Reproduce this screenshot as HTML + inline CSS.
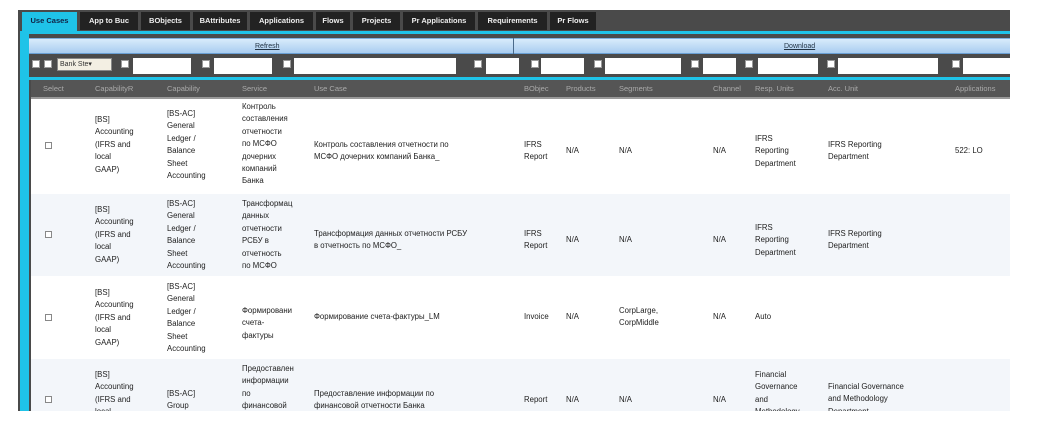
<!DOCTYPE html>
<html><head><style>
*{margin:0;padding:0;box-sizing:border-box}
body{width:1040px;height:437px;background:#fff;position:relative;overflow:hidden;font-family:"Liberation Sans","Noto Sans CJK SC",sans-serif;font-size:8px;color:#333}
.a{position:absolute}
.tab{position:absolute;top:12px;height:18px;background:#222;color:#eee;font-size:7.5px;font-weight:bold;line-height:18px;text-align:center}
.cb{position:absolute;width:8px;height:8px;background:#fff;border:1px solid #999}
.in{position:absolute;height:16px;background:#fff;top:58px}
.h{position:absolute;top:84px;color:#aaa;font-size:7.5px}
.t{position:absolute;line-height:12.4px;font-size:7.8px;color:#222}
.ck{position:absolute;width:7px;height:7px;border:1px solid #888;background:#fff;left:45px}
</style></head><body>
<div class="a" style="left:18px;top:10px;width:992px;height:88px;background:#4a4a4a"></div>
<div class="tab" style="left:22px;width:55px;background:#1fc3e8;color:#124;top:12px;height:20px">Use Cases</div>
<div class="tab" style="left:80px;width:58px">App to Buc</div>
<div class="tab" style="left:141px;width:49px">BObjects</div>
<div class="tab" style="left:193px;width:54px">BAttributes</div>
<div class="tab" style="left:250px;width:63px">Applications</div>
<div class="tab" style="left:316px;width:34px">Flows</div>
<div class="tab" style="left:353px;width:47px">Projects</div>
<div class="tab" style="left:403px;width:72px">Pr Applications</div>
<div class="tab" style="left:478px;width:69px">Requirements</div>
<div class="tab" style="left:550px;width:46px">Pr Flows</div>
<div class="a" style="left:18px;top:31px;width:992px;height:3px;background:#1fc3e8"></div>
<div class="a" style="left:20px;top:31px;width:9px;height:380px;background:#1fc3e8"></div>
<div class="a" style="left:18px;top:31px;width:2px;height:380px;background:#4a4a4a"></div>
<div class="a" style="left:29px;top:34px;width:2px;height:377px;background:#4a4a4a"></div>
<div class="a" style="left:29px;top:38px;width:981px;height:16px;background:linear-gradient(#d8ebfb,#a9cdf0);border-top:1px solid #7fb0de;border-bottom:1px solid #6a9fd4"></div>
<div class="a" style="left:513px;top:38px;width:1px;height:16px;background:#4a6a8a"></div>
<div class="a" style="left:255px;top:43px;font-size:7px;color:#234;text-decoration:underline">Refresh</div>
<div class="a" style="left:784px;top:43px;font-size:7px;color:#234;text-decoration:underline">Download</div>
<div class="cb" style="left:32px;top:60px"></div><div class="cb" style="left:44px;top:60px"></div>
<div class="a" style="left:57px;top:58px;width:55px;height:13px;background:#f3efe3;border:1px solid #888;font-size:7px;line-height:11px;padding-left:2px">Bank Ste▾</div>
<div class="cb" style="left:121px;top:60px"></div><div class="in" style="left:133px;width:58px"></div>
<div class="cb" style="left:202px;top:60px"></div><div class="in" style="left:214px;width:58px"></div>
<div class="cb" style="left:283px;top:60px"></div><div class="in" style="left:294px;width:162px"></div>
<div class="cb" style="left:474px;top:60px"></div><div class="in" style="left:486px;width:33px"></div>
<div class="cb" style="left:531px;top:60px"></div><div class="in" style="left:541px;width:43px"></div>
<div class="cb" style="left:594px;top:60px"></div><div class="in" style="left:605px;width:76px"></div>
<div class="cb" style="left:691px;top:60px"></div><div class="in" style="left:703px;width:33px"></div>
<div class="cb" style="left:745px;top:60px"></div><div class="in" style="left:758px;width:60px"></div>
<div class="cb" style="left:827px;top:60px"></div><div class="in" style="left:838px;width:100px"></div>
<div class="cb" style="left:952px;top:60px"></div><div class="in" style="left:963px;width:47px"></div>
<div class="a" style="left:29px;top:77px;width:981px;height:3px;background:#1fc3e8"></div>
<div class="a" style="left:31px;top:80px;width:979px;height:17px;background:#555"></div>
<div class="a" style="left:31px;top:97px;width:979px;height:2px;background:#999"></div>
<div class="h" style="left:43px">Select</div><div class="h" style="left:95px">CapabilityR</div><div class="h" style="left:167px">Capability</div><div class="h" style="left:242px">Service</div><div class="h" style="left:314px">Use Case</div><div class="h" style="left:524px">BObjec</div><div class="h" style="left:566px">Products</div><div class="h" style="left:619px">Segments</div><div class="h" style="left:713px">Channel</div><div class="h" style="left:755px">Resp. Units</div><div class="h" style="left:828px">Acc. Unit</div><div class="h" style="left:955px">Applications</div>
<div class="a" style="left:31px;top:194px;width:979px;height:82px;background:#f3f6fa"></div>
<div class="a" style="left:31px;top:359px;width:979px;height:52px;background:#f3f6fa"></div>
<!-- row1 -->
<div class="ck" style="top:142px"></div>
<div class="t" style="left:95px;top:114px">[BS]<br>Accounting<br>(IFRS and<br>local<br>GAAP)</div>
<div class="t" style="left:167px;top:108px">[BS-AC]<br>General<br>Ledger /<br>Balance<br>Sheet<br>Accounting</div>
<div class="t" style="left:242px;top:101px">Контроль<br>составления<br>отчетности<br>по МСФО<br>дочерних<br>компаний<br>Банка</div>
<div class="t" style="left:314px;top:139px">Контроль составления отчетности по<br>МСФО дочерних компаний Банка_</div>
<div class="t" style="left:524px;top:139px">IFRS<br>Report</div><div class="t" style="left:566px;top:145px">N/A</div><div class="t" style="left:619px;top:145px">N/A</div><div class="t" style="left:713px;top:145px">N/A</div>
<div class="t" style="left:755px;top:133px">IFRS<br>Reporting<br>Department</div><div class="t" style="left:828px;top:139px">IFRS Reporting<br>Department</div><div class="t" style="left:955px;top:145px">522: LO</div>
<!-- row2 -->
<div class="ck" style="top:231px"></div>
<div class="t" style="left:95px;top:204px">[BS]<br>Accounting<br>(IFRS and<br>local<br>GAAP)</div>
<div class="t" style="left:167px;top:198px">[BS-AC]<br>General<br>Ledger /<br>Balance<br>Sheet<br>Accounting</div>
<div class="t" style="left:242px;top:198px">Трансформац<br>данных<br>отчетности<br>РСБУ в<br>отчетность<br>по МСФО</div>
<div class="t" style="left:314px;top:228px">Трансформация данных отчетности РСБУ<br>в отчетность по МСФО_</div>
<div class="t" style="left:524px;top:228px">IFRS<br>Report</div><div class="t" style="left:566px;top:234px">N/A</div><div class="t" style="left:619px;top:234px">N/A</div><div class="t" style="left:713px;top:234px">N/A</div>
<div class="t" style="left:755px;top:222px">IFRS<br>Reporting<br>Department</div><div class="t" style="left:828px;top:228px">IFRS Reporting<br>Department</div>
<!-- row3 -->
<div class="ck" style="top:314px"></div>
<div class="t" style="left:95px;top:287px">[BS]<br>Accounting<br>(IFRS and<br>local<br>GAAP)</div>
<div class="t" style="left:167px;top:281px">[BS-AC]<br>General<br>Ledger /<br>Balance<br>Sheet<br>Accounting</div>
<div class="t" style="left:242px;top:305px">Формировани<br>счета-<br>фактуры</div>
<div class="t" style="left:314px;top:311px">Формирование счета-фактуры_LM</div>
<div class="t" style="left:524px;top:311px">Invoice</div><div class="t" style="left:566px;top:311px">N/A</div><div class="t" style="left:619px;top:305px">CorpLarge,<br>CorpMiddle</div><div class="t" style="left:713px;top:311px">N/A</div><div class="t" style="left:755px;top:311px">Auto</div>
<!-- row4 -->
<div class="ck" style="top:396px"></div>
<div class="a" style="left:31px;top:359px;width:979px;height:52px;overflow:hidden">
<div class="t" style="left:64px;top:10px">[BS]<br>Accounting<br>(IFRS and<br>local</div>
<div class="t" style="left:136px;top:29px">[BS-AC]<br>Group<br>Reporting</div>
<div class="t" style="left:211px;top:4px">Предоставлен<br>информации<br>по<br>финансовой</div>
<div class="t" style="left:283px;top:29px">Предоставление информации по<br>финансовой отчетности Банка</div>
<div class="t" style="left:493px;top:35px">Report</div><div class="t" style="left:535px;top:35px">N/A</div><div class="t" style="left:588px;top:35px">N/A</div><div class="t" style="left:682px;top:35px">N/A</div>
<div class="t" style="left:724px;top:10px">Financial<br>Governance<br>and<br>Methodology</div><div class="t" style="left:797px;top:22px">Financial Governance<br>and Methodology<br>Department</div>
</div>
</body></html>
